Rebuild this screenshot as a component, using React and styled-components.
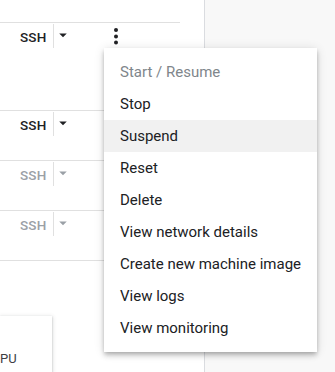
import React from "react";
import styled, { createGlobalStyle } from "styled-components";

const Global = createGlobalStyle`
  html, body { margin: 0; padding: 0; }
  body {
    font-family: Roboto, "Noto Sans", Arial, sans-serif;
    background: #fff;
    overflow: hidden;
    width: 335px;
    height: 372px;
  }
`;

const Page = styled.div`
  position: relative;
  display: flex;
  width: 335px;
  height: 372px;
  overflow: hidden;
`;

const LeftPane = styled.div`
  width: 204px;
  flex: none;
  background: #fff;
  border-right: 1px solid #dadce0;
  display: flex;
  flex-direction: column;
`;

const RightPane = styled.div`
  flex: 1;
  background: #f8f8f8;
`;

const Table = styled.div`
  width: 180px;
  margin-top: 22px;
  border-bottom: 1px solid #e0e0e0;
`;

const Row = styled.div`
  border-top: 1px solid #e0e0e0;
  height: ${(p) => p.$h}px;
  padding-top: 1px;
  box-sizing: content-box;
  display: flex;
  align-items: flex-start;
`;

const SshGroup = styled.div`
  display: flex;
  align-items: center;
  height: 24px;
  margin-left: 20px;
  color: ${(p) => (p.$disabled ? "#9aa0a6" : "#202124")};
`;

const SshLabel = styled.span`
  font-size: 13.5px;
  font-weight: 500;
  letter-spacing: 0.2px;
  width: 33px;
  padding-top: 2px;
`;

const Divider = styled.span`
  width: 1px;
  height: 24px;
  background: #e0e0e0;
`;

const Caret = styled.svg`
  width: 18px;
  height: 18px;
  margin-top: -2px;
  fill: currentColor;
`;

const Kebab = styled.svg`
  width: 24px;
  height: 24px;
  margin-left: 32px;
  fill: #202124;
`;

const Card = styled.div`
  margin-top: auto;
  width: 52px;
  height: 56px;
  background: #fff;
  box-shadow: 0 1px 2px rgba(60, 64, 67, 0.3), 0 1px 4px 1px rgba(60, 64, 67, 0.12);
  box-sizing: border-box;
  padding: 35px 0 0 0;
  font-size: 13px;
  color: #3c4043;
`;

const Menu = styled.ul`
  position: absolute;
  left: 104px;
  top: 48px;
  width: 213px;
  margin: 0;
  padding: 8px 0;
  list-style: none;
  background: #fff;
  box-shadow: 0 2px 4px -1px rgba(0, 0, 0, 0.2), 0 4px 5px 0 rgba(0, 0, 0, 0.14),
    0 1px 10px 0 rgba(0, 0, 0, 0.12);
`;

const Item = styled.li`
  height: 32px;
  display: flex;
  align-items: center;
  padding: 0 16px;
  font-size: 15px;
  color: ${(p) => (p.$disabled ? "#80868b" : "#202124")};
  background: ${(p) => (p.$active ? "#f1f1f1" : "transparent")};
  white-space: nowrap;
`;

const rows = [
  { h: 86, disabled: false, kebab: true },
  { h: 48, disabled: false },
  { h: 48, disabled: true },
  { h: 48, disabled: true },
];

const items = [
  { label: "Start / Resume", disabled: true },
  { label: "Stop" },
  { label: "Suspend", active: true },
  { label: "Reset" },
  { label: "Delete" },
  { label: "View network details" },
  { label: "Create new machine image" },
  { label: "View logs" },
  { label: "View monitoring" },
];

export default function App() {
  return (
    <>
      <Global />
      <Page>
        <LeftPane>
          <Table>
            {rows.map((r, i) => (
              <Row key={i} $h={r.h}>
                <SshGroup $disabled={r.disabled}>
                  <SshLabel>SSH</SshLabel>
                  <Divider />
                  <Caret viewBox="0 0 24 24">
                    <path d="M7 10l5 5 5-5z" />
                  </Caret>
                </SshGroup>
                {r.kebab && (
                  <Kebab viewBox="0 0 24 24">
                    <circle cx="12" cy="6" r="2" />
                    <circle cx="12" cy="12.5" r="2" />
                    <circle cx="12" cy="18.5" r="2" />
                  </Kebab>
                )}
              </Row>
            ))}
          </Table>
          <Card>PU</Card>
        </LeftPane>
        <RightPane />
        <Menu>
          {items.map((it) => (
            <Item key={it.label} $disabled={it.disabled} $active={it.active}>
              {it.label}
            </Item>
          ))}
        </Menu>
      </Page>
    </>
  );
}
